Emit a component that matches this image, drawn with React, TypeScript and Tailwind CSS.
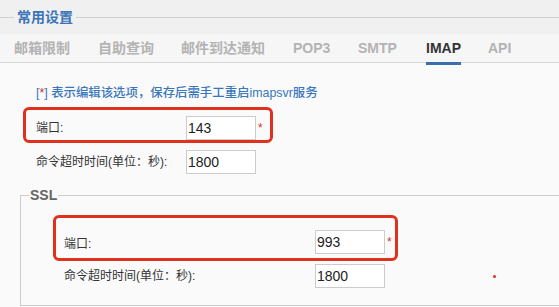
export default function App() {
  const tabs = [
    { label: '邮箱限制', w: 'w-[84px]' },
    { label: '自助查询', w: 'w-[83px]' },
    { label: '邮件到达通知', w: 'w-[112px]' },
    { label: 'POP3', w: 'w-[65px]' },
    { label: 'SMTP', w: 'w-[68px]' },
    { label: 'IMAP', w: 'w-[62px]', active: true },
    { label: 'API', w: 'w-[62px]' },
  ];

  return (
    <div className="w-[559px] h-[307px] overflow-hidden bg-[#fafafa] font-['Liberation_Sans','Noto_Sans_CJK_SC',sans-serif]">
      {/* 常用设置 header */}
      <div className="h-[34px] bg-[#f0f0f0] flex items-center">
        <div className="w-[14px] h-px bg-[#cfcfcf]" />
        <span className="px-[3px] text-[14px] leading-[16px] font-bold text-[#3b74b6]">常用设置</span>
        <div className="flex-1 h-px bg-[#cfcfcf]" />
      </div>

      {/* Tabs */}
      <div className="h-[29px] bg-[#f6f6f6] border-b border-[#d6d6d6] flex pl-[14px]">
        {tabs.map((t) => (
          <div key={t.label} className={`${t.w} h-full flex items-center shrink-0`}>
            <span
              className={`relative text-[14px] leading-[16px] font-bold ${
                t.active ? 'text-[#333333]' : 'text-[#b3b3b3]'
              }`}
            >
              {t.label}
              {t.active && (
                <span className="absolute left-0 right-0 top-[22px] h-[3px] bg-[#3a6fae]" />
              )}
            </span>
          </div>
        ))}
      </div>

      {/* Content */}
      <div className="pt-[22px]">
        <p className="pl-[36px] text-[12.4px] leading-[16px] font-medium text-[#3877bb]">
          [<span className="text-[#e0301e]">*</span>] 表示编辑该选项，保存后需手工重启imapsvr服务
        </p>

        <div className="mt-[6px] ml-[23px] w-[250px] border-[3px] border-[#e0301e] rounded-[6px] pl-[10px] pt-[6px] flex">
          <span className="w-[150px] self-center text-[12px] text-[#333333]">端口:</span>
          <input
            readOnly
            value="143"
            className="w-[70px] h-[24px] border border-[#cccccc] bg-white px-px text-[14px] text-[#222222] outline-none"
          />
          <span className="ml-[2px] mt-[6px] text-[12px] leading-[12px] text-[#e0301e]">*</span>
        </div>

        <div className="mt-[7px] pl-[36px] flex">
          <span className="w-[150px] self-center text-[12px] text-[#333333]">命令超时时间(单位：秒):</span>
          <input
            readOnly
            value="1800"
            className="w-[70px] h-[24px] border border-[#cccccc] bg-white px-px text-[14px] text-[#222222] outline-none"
          />
        </div>

        {/* SSL */}
        <fieldset className="mt-[13px] ml-[20px] w-[580px] border border-[#cccccc] pt-[12px] pb-[17px]">
          <legend className="ml-[8px] px-px text-[14px] leading-[16px] font-bold text-[#666666]">SSL</legend>

          <div className="ml-[32px] w-[345px] h-[46px] border-[3px] border-[#e0301e] rounded-[6px] pl-[8px] pt-[12px] flex">
            <span className="w-[251px] self-center text-[12px] text-[#333333]">端口:</span>
            <input
              readOnly
              value="993"
              className="w-[70px] h-[24px] border border-[#cccccc] bg-white px-px text-[14px] text-[#222222] outline-none"
            />
            <span className="ml-[2px] mt-[6px] text-[12px] leading-[12px] text-[#e0301e]">*</span>
          </div>

          <div className="mt-[3px] pl-[43px] flex items-center">
            <span className="w-[251px] text-[12px] text-[#333333]">命令超时时间(单位：秒):</span>
            <input
              readOnly
              value="1800"
              className="w-[70px] h-[24px] border border-[#cccccc] bg-white px-px text-[14px] text-[#222222] outline-none"
            />
            <span className="ml-[108px] w-[3px] h-[3px] rounded-full bg-[#e0301e]" />
          </div>
        </fieldset>
      </div>
    </div>
  );
}
